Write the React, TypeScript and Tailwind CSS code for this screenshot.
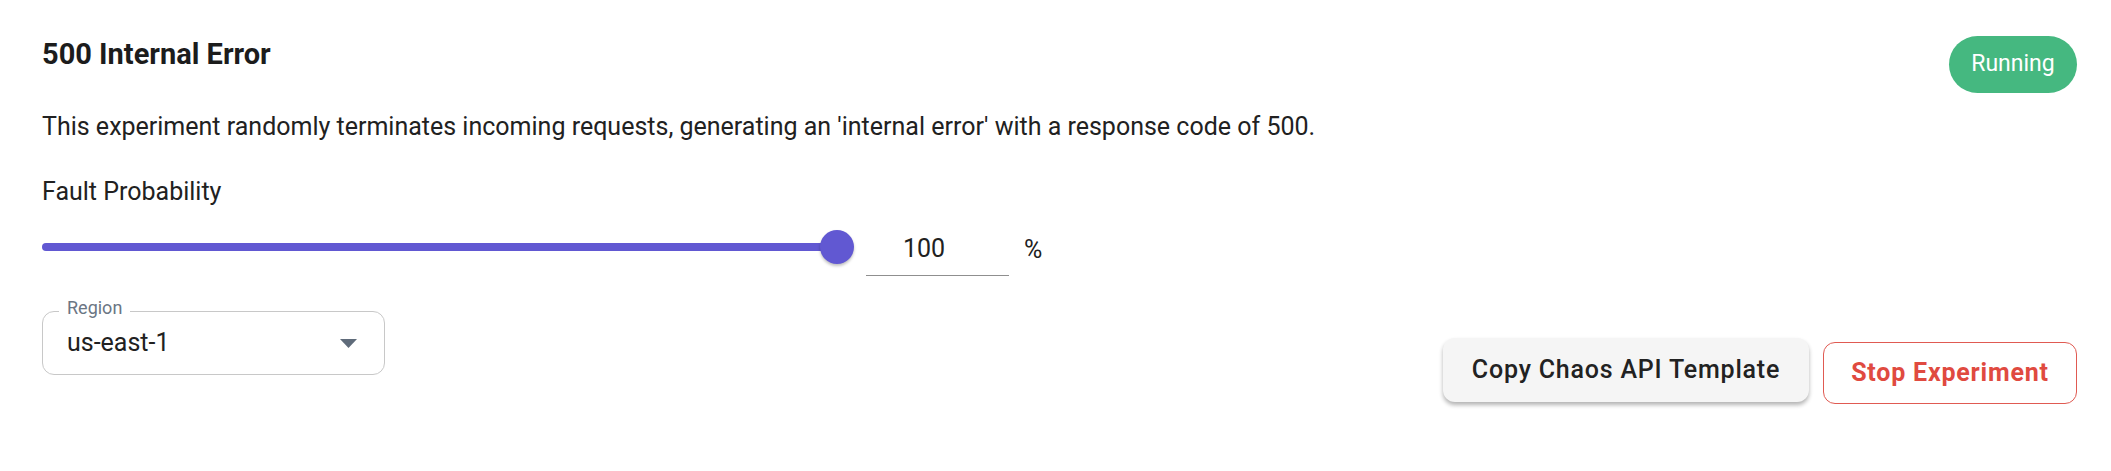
import { useState } from 'react'

export default function App() {
  const [value] = useState(100)
  const [region] = useState('us-east-1')

  return (
    <div className="w-[2111px] h-[471px] bg-white pl-[42px] pr-[34px] pt-[36px] text-[#212121]" style={{ fontFamily: 'Roboto, "Liberation Sans", sans-serif' }}>
      {/* Header */}
      <div className="flex items-start justify-between">
        <h2 className="text-[29px] leading-[36px] font-bold text-[#1c1c1c]">500 Internal Error</h2>
        <span className="flex h-[57px] w-[128px] items-center justify-center rounded-full bg-[#45b880] text-[23px] text-white">
          Running
        </span>
      </div>

      <p className="mt-[16px] text-[25px] leading-[36px]">
        This experiment randomly terminates incoming requests, generating an 'internal error' with a response code of 500.
      </p>

      <p className="mt-[29px] text-[25px] leading-[36px]">Fault Probability</p>

      {/* Slider row */}
      <div className="mt-[8px] flex items-end">
        <div className="flex h-[58px] w-[795px] items-center">
          <div className="relative h-[8px] w-full rounded-full bg-[#6158d2]">
            <div className="absolute right-[-17px] top-1/2 h-[34px] w-[34px] -translate-y-1/2 rounded-full bg-[#6158d2] shadow-[0_2px_3px_rgba(0,0,0,0.25)]" />
          </div>
        </div>
        <div className="ml-[29px] flex h-[58px] w-[143px] items-end border-b border-[#8f8f8f] pb-[8px] pl-[37px] text-[25px] leading-[36px]">
          {value}
        </div>
        <div className="ml-[15px] flex h-[58px] items-end pb-[8px] text-[25px] leading-[36px]">%</div>
      </div>

      {/* Region + actions */}
      <div className="mt-[35px] flex items-start justify-between">
        <div className="relative flex h-[64px] w-[343px] items-center justify-between rounded-[12px] border border-[#c8c8c8] pl-[24px] pr-[27px]">
          <span className="absolute left-[16px] top-[-16px] bg-white px-[8px] text-[18px] leading-[24px] text-[#6b7684]">Region</span>
          <span className="text-[25px] leading-[36px]">{region}</span>
          <svg width="17" height="9" viewBox="0 0 17 9">
            <path d="M0 0h17L8.5 9z" fill="#5f6b7a" />
          </svg>
        </div>

        <div className="mt-[27px] flex items-start gap-[14px]">
          <button className="flex h-[64px] w-[366px] items-center justify-center rounded-[12px] bg-[#f5f5f5] text-[25px] font-medium tracking-[0.8px] text-[#222] shadow-[0_3px_4px_rgba(0,0,0,0.3)]">
            Copy Chaos API Template
          </button>
          <button className="mt-[4px] flex h-[62px] w-[254px] items-center justify-center rounded-[12px] border border-[#e05a52] bg-white text-[25px] font-bold tracking-[0.8px] text-[#e04a40]">
            Stop Experiment
          </button>
        </div>
      </div>
    </div>
  )
}
